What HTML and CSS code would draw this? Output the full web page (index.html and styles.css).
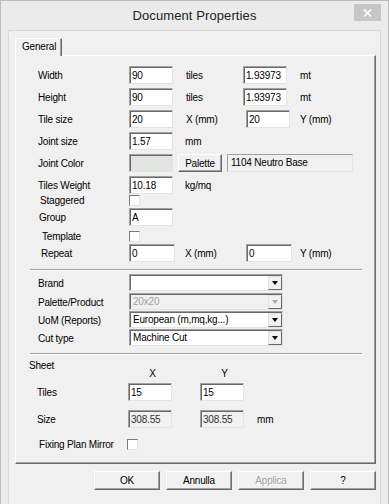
FILE: index.html
```html
<!DOCTYPE html>
<html lang="en">
<head>
    <meta charset="UTF-8">
    <title>Document Properties</title>
    <link rel="stylesheet" href="styles.css">
</head>
<body>

<div class="window">

    <!-- Title bar -->
    <div class="titlebar">
        <span class="title">Document Properties</span>
        <span class="close">
            <svg width="9" height="8" viewBox="0 0 9 8"><path d="M1 0.5 L8 7.5 M8 0.5 L1 7.5" stroke="#fff" stroke-width="1.6" fill="none"/></svg>
        </span>
    </div>

    <div class="client">
        <div class="tabs">
            <div class="tab">General</div>
        </div>

        <div class="panel">

            <div class="row first">
                <span class="lbl">Width</span>
                <input class="fld" type="text" value="90">
                <span class="unit u-w">tiles</span>
                <input class="fld" type="text" value="1.93973">
                <span class="unit u-mt">mt</span>
            </div>

            <div class="row">
                <span class="lbl">Height</span>
                <input class="fld" type="text" value="90">
                <span class="unit u-w">tiles</span>
                <input class="fld" type="text" value="1.93973">
                <span class="unit u-mt">mt</span>
            </div>

            <div class="row">
                <span class="lbl">Tile size</span>
                <input class="fld" type="text" value="20">
                <span class="unit u-x">X (mm)</span>
                <input class="fld" type="text" value="20">
                <span class="unit u-y">Y (mm)</span>
            </div>

            <div class="row">
                <span class="lbl">Joint size</span>
                <input class="fld" type="text" value="1.57">
                <span class="unit u-s">mm</span>
            </div>

            <div class="row">
                <span class="lbl">Joint Color</span>
                <span class="swatch"></span>
                <button class="btn small">Palette</button>
                <span class="readout">1104 Neutro Base</span>
            </div>

            <div class="row">
                <span class="lbl">Tiles Weight</span>
                <input class="fld" type="text" value="10.18">
                <span class="unit u-s">kg/mq</span>
            </div>

            <div class="row check-row stag">
                <span class="lbl in2">Staggered</span>
                <input class="check" type="checkbox">
            </div>

            <div class="row group">
                <span class="lbl in1">Group</span>
                <input class="fld" type="text" value="A">
            </div>

            <div class="row check-row tmpl">
                <span class="lbl in4">Template</span>
                <input class="check" type="checkbox">
            </div>

            <div class="row repeat">
                <span class="lbl in3">Repeat</span>
                <input class="fld wide" type="text" value="0">
                <span class="unit u-rx">X (mm)</span>
                <input class="fld wide" type="text" value="0">
                <span class="unit u-ry">Y (mm)</span>
            </div>

            <div class="sep"></div>

            <div class="row combo-row brand">
                <span class="lbl">Brand</span>
                <div class="combo"><span class="combo-text"></span><span class="arrow"><i></i></span></div>
            </div>

            <div class="row combo-row pp">
                <span class="lbl">Palette/Product</span>
                <div class="combo off"><span class="combo-text">20x20</span><span class="arrow"><i></i></span></div>
            </div>

            <div class="row combo-row">
                <span class="lbl">UoM (Reports)</span>
                <div class="combo"><span class="combo-text">European (m,mq,kg...)</span><span class="arrow"><i></i></span></div>
            </div>

            <div class="row combo-row">
                <span class="lbl">Cut type</span>
                <div class="combo"><span class="combo-text">Machine Cut</span><span class="arrow"><i></i></span></div>
            </div>

            <div class="sep"></div>

            <!-- Sheet -->
            <div class="sheet-head">
                <span class="sheet-title">Sheet</span>
                <span class="axis">X</span>
                <span class="axis second">Y</span>
            </div>

            <div class="row sheet tiles">
                <span class="lbl">Tiles</span>
                <input class="fld" type="text" value="15">
                <input class="fld second" type="text" value="15">
            </div>

            <div class="row sheet size">
                <span class="lbl">Size</span>
                <input class="fld off" type="text" value="308.55">
                <input class="fld off second" type="text" value="308.55">
                <span class="unit u-mm">mm</span>
            </div>

            <div class="row check-row mirror">
                <span class="lbl">Fixing Plan Mirror</span>
                <input class="check" type="checkbox">
            </div>

        </div>

        <div class="buttons">
            <button class="btn">OK</button>
            <button class="btn">Annulla</button>
            <button class="btn disabled">Applica</button>
            <button class="btn">?</button>
        </div>
    </div>

</div>

</body>
</html>
```

FILE: styles.css
```css
/* General Styling */
body {
    margin: 0;
    font-family: "Liberation Sans", Arial, sans-serif;
    font-size: 10px;
    letter-spacing: -0.2px;
    color: #000;
    background-color: #e9e9e9;
}

.window {
    width: 389px;
    height: 504px;
    box-sizing: border-box;
    border: 1px solid #bcbcbc;
    border-bottom: none;
    background-color: #ebebeb;
    display: flex;
    flex-direction: column;
    overflow: hidden;
}

/* Title bar */
.titlebar {
    height: 29px;
    flex: none;
    display: grid;
    grid-template-columns: 1fr auto 1fr;
    align-items: start;
}

.title {
    grid-column: 2;
    padding-top: 7px;
    font-size: 13px;
    line-height: 15px;
    letter-spacing: 0.1px;
    color: #222;
}

.close {
    grid-column: 3;
    justify-self: end;
    margin-top: 3px;
    margin-right: 7px;
    width: 27px;
    height: 17px;
    background-color: #c7c7c7;
    display: flex;
    align-items: center;
    justify-content: center;
}

/* Client area */
.client {
    flex: 1;
    margin: 0 7px;
    padding: 7px 0 0 6px;
    background-color: #f0f0f0;
    border: 1px solid #d9d9d9;
    border-bottom: none;
}

.tabs {
    display: flex;
}

.tab {
    position: relative;
    z-index: 1;
    width: 47px;
    height: 18px;
    margin-bottom: -1px;
    box-sizing: border-box;
    padding-left: 6px;
    line-height: 15px;
    background-color: #f0f0f0;
    border-top: 1px solid #fff;
    border-left: 1px solid #fff;
    border-right: 1px solid #696969;
    border-top-left-radius: 2px;
    box-shadow: inset -1px 0 #a0a0a0;
}

.panel {
    width: 361px;
    height: 409px;
    box-sizing: border-box;
    padding-top: 10px;
    border-top: 1px solid #fff;
    border-left: 1px solid #fff;
    border-right: 1px solid #696969;
    border-bottom: 1px solid #696969;
    box-shadow: inset -1px -1px #a0a0a0;
}

/* Rows */
.row {
    display: flex;
    align-items: center;
    height: 18px;
    margin-top: 4px;
    padding-left: 22px;
}

.row.first {
    margin-top: 0;
}

.lbl {
    flex: none;
    width: 91px;
    padding-top: 1px;
    box-sizing: border-box;
    white-space: nowrap;
}

.lbl.in1 { padding-left: 1px; }
.lbl.in2 { padding-left: 2px; }
.lbl.in3 { padding-left: 3px; }
.lbl.in4 { padding-left: 4px; }

.check-row {
    height: 12px;
}

.stag { margin-top: 0; }
.group { margin-top: 2px; }
.tmpl { margin-top: 4px; }
.repeat { margin-top: 2px; }

.fld {
    flex: none;
    width: 44px;
    height: 18px;
    margin: 0;
    padding: 0 0 0 2px;
    box-sizing: border-box;
    font: inherit;
    letter-spacing: inherit;
    color: #000;
    background-color: #fff;
    border: 1px solid;
    border-color: #a0a0a0 #e3e3e3 #e3e3e3 #a0a0a0;
    box-shadow: inset 1px 1px #696969;
    outline: none;
}

.fld.wide {
    width: 46px;
}

.fld.off {
    background-color: #f0f0f0;
    color: #333;
}

.unit {
    flex: none;
    box-sizing: border-box;
    padding-top: 1px;
    white-space: nowrap;
}

.u-w  { width: 70px; padding-left: 13px; }
.u-mt { padding-left: 13px; }
.u-x  { width: 73px; padding-left: 13px; }
.u-y  { padding-left: 10px; }
.u-s  { padding-left: 12px; }
.u-rx { width: 71px; padding-left: 10px; }
.u-ry { padding-left: 8px; }
.u-mm { padding-left: 13px; }

.swatch {
    flex: none;
    width: 44px;
    height: 18px;
    box-sizing: border-box;
    background-color: #e1e4e1;
    border: 1px solid;
    border-color: #a0a0a0 #e3e3e3 #e3e3e3 #a0a0a0;
    box-shadow: inset 1px 1px #696969;
}

.readout {
    flex: none;
    width: 126px;
    height: 18px;
    margin-left: 5px;
    padding: 2px 0 0 3px;
    box-sizing: border-box;
    background-color: #f0f0f0;
    border: 1px solid;
    border-color: #a0a0a0 #e3e3e3 #e3e3e3 #a0a0a0;
    white-space: nowrap;
}

.check {
    appearance: none;
    -webkit-appearance: none;
    flex: none;
    width: 11px;
    height: 11px;
    margin: 0;
    background-color: #fff;
    border: 1px solid;
    border-color: #7a7a7a #e3e3e3 #e3e3e3 #7a7a7a;
}

/* Separators */
.sep {
    width: 332px;
    margin: 7px 0 0 14px;
    border-top: 1px solid #a0a0a0;
    border-bottom: 1px solid #fff;
}

/* Combo boxes */
.combo-row {
    height: 17px;
    margin-top: 1px;
}

.brand { margin-top: 3px; }
.pp { margin-top: 2px; }

.combo {
    flex: none;
    display: flex;
    width: 154px;
    height: 17px;
    box-sizing: border-box;
    background-color: #fff;
    border: 1px solid;
    border-color: #a0a0a0 #e3e3e3 #e3e3e3 #a0a0a0;
    box-shadow: inset 1px 1px #696969;
}

.combo-text {
    flex: 1;
    padding: 2px 0 0 3px;
    white-space: nowrap;
    overflow: hidden;
}

.arrow {
    flex: none;
    width: 14px;
    box-sizing: border-box;
    margin: 1px 0 0 0;
    background-color: #f0f0f0;
    border-top: 1px solid #e3e3e3;
    border-left: 1px solid #e3e3e3;
    border-right: 1px solid #696969;
    border-bottom: 1px solid #696969;
    display: flex;
    align-items: center;
    justify-content: center;
}

.arrow i {
    width: 0;
    height: 0;
    border-left: 3.5px solid transparent;
    border-right: 3.5px solid transparent;
    border-top: 4px solid #000;
}

.combo.off {
    background-color: #f0f0f0;
    color: #a0a0a0;
}

.combo.off .arrow i {
    border-top-color: #a8a8a8;
}

/* Sheet section */
.sheet-head {
    display: flex;
    height: 20px;
    margin-top: 5px;
    padding-left: 13px;
}

.sheet-title {
    width: 99px;
    line-height: 12px;
    align-self: flex-start;
}

.axis {
    width: 44px;
    box-sizing: border-box;
    padding-left: 5px;
    line-height: 12px;
    text-align: center;
    align-self: flex-end;
}

.axis.second {
    margin-left: 28px;
}

.row.sheet {
    padding-left: 21px;
}

.tiles { margin-top: 3px; }
.size { margin-top: 9px; }

.fld.second {
    margin-left: 28px;
}

.mirror {
    margin-top: 10px;
    padding-left: 23px;
}

.mirror .lbl {
    width: 88px;
}

/* Buttons */
.btn {
    width: 66px;
    height: 19px;
    margin: 0;
    padding: 0;
    box-sizing: border-box;
    font: inherit;
    letter-spacing: inherit;
    color: #000;
    background-color: #f0f0f0;
    border: 1px solid;
    border-color: #fff #696969 #696969 #fff;
    box-shadow: inset -1px -1px #a0a0a0;
}

.btn.small {
    width: 44px;
    height: 18px;
    margin-left: 5px;
}

.btn.disabled {
    color: #a0a0a0;
    text-shadow: 1px 1px #fff;
}

.buttons {
    width: 361px;
    display: flex;
    justify-content: flex-end;
    gap: 6px;
    margin-top: 7px;
}
```
